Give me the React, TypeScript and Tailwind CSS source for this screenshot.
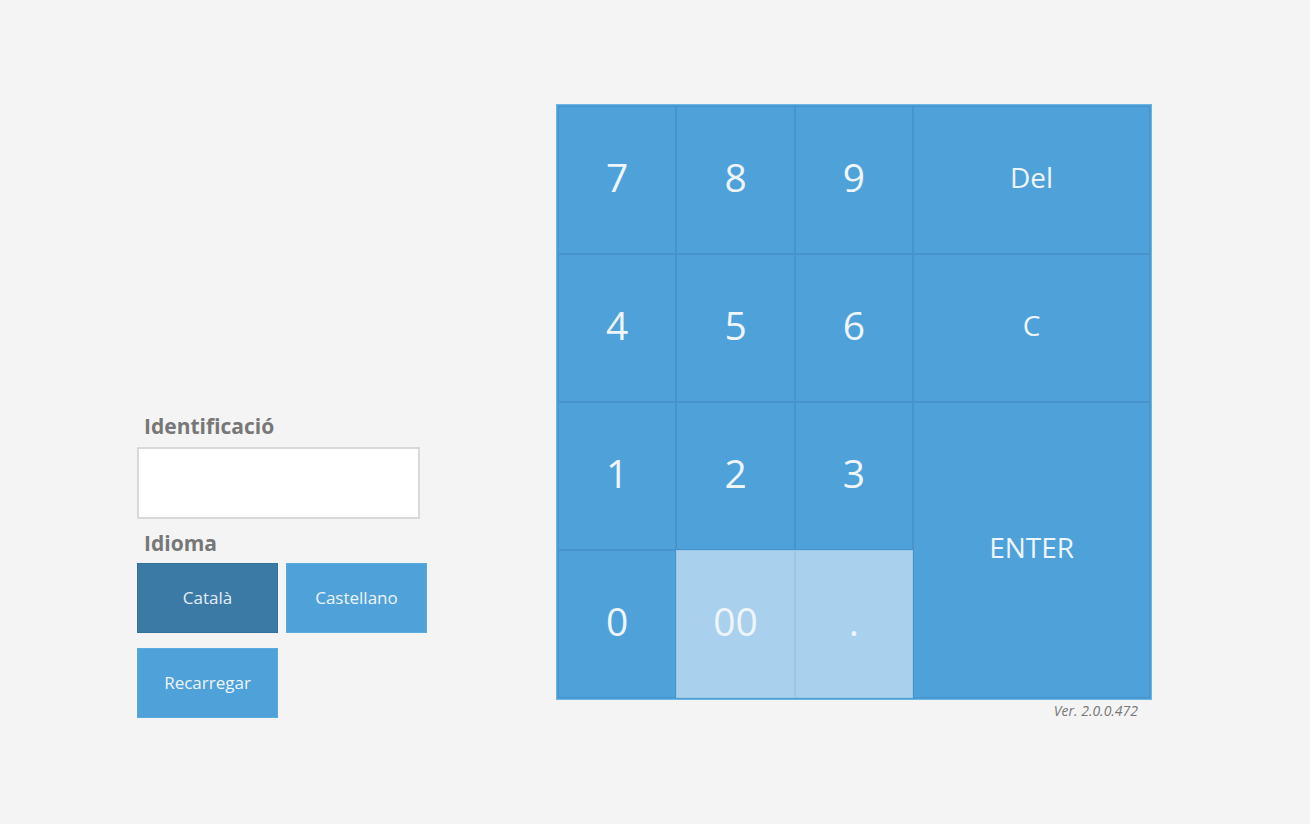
import React from 'react';

const font = { fontFamily: '"Open Sans", "Liberation Sans", sans-serif' };

type Key = { label: string; span?: string; light?: boolean; big?: boolean };

const keys: Key[] = [
  { label: '7', big: true },
  { label: '8', big: true },
  { label: '9', big: true },
  { label: 'Del', span: 'col-span-2' },
  { label: '4', big: true },
  { label: '5', big: true },
  { label: '6', big: true },
  { label: 'C', span: 'col-span-2' },
  { label: '1', big: true },
  { label: '2', big: true },
  { label: '3', big: true },
  { label: 'ENTER', span: 'col-span-2 row-span-2' },
  { label: '0', big: true },
  { label: '00', big: true, light: true },
  { label: '.', big: true, light: true },
];

export default function App() {
  return (
    <div className="min-h-[824px] w-full bg-[#f4f4f4] pt-[104px]" style={font}>
      <div className="flex items-start">
        {/* Left panel */}
        <div className="ml-[137px] mt-[308px] w-[290px]">
          <div className="pl-[7px] text-[21px] font-bold leading-[28px] text-[#777]">Identificació</div>
          <div className="mt-[7px] h-[72px] w-[283px] border-2 border-[#d9d9d9] bg-white"></div>
          <div className="mt-[10px] pl-[7px] text-[21px] font-bold leading-[28px] text-[#777]">Idioma</div>
          <div className="mt-[6px] flex gap-[8px]">
            <button className="h-[70px] w-[141px] border border-[#35709b] bg-[#3c7aa6] text-[17px] text-[#e4edf5]">
              Català
            </button>
            <button className="h-[70px] w-[141px] border border-[#5aaade] bg-[#4fa1d9] text-[17px] text-[#eef5fb]">
              Castellano
            </button>
          </div>
          <button className="mt-[15px] h-[70px] w-[141px] border border-[#5aaade] bg-[#4fa1d9] text-[17px] text-[#eef5fb]">
            Recarregar
          </button>
        </div>

        {/* Keypad */}
        <div className="ml-[129px] flex flex-col">
          <div className="h-[596px] w-[596px] border border-[#6cb4e2] bg-[#4c9ed7] p-px">
            <div className="grid h-full w-full grid-cols-5 grid-rows-4">
              {keys.map(k => (
                <div
                  key={k.label}
                  className={`flex items-center justify-center border pb-[6px] ${k.span ?? ''} ${
                    k.light ? 'border-[#9cc6e5] bg-[#a9d0ec]' : 'border-[#4694cb] bg-[#4fa1d9]'
                  } ${k.big ? 'text-[39px]' : 'text-[28px]'} text-[#eef5fb]`}
                >
                  {k.label}
                </div>
              ))}
            </div>
          </div>
          <div className="pr-[14px] pt-[1px] text-right text-[14px] italic leading-[20px] text-[#777]">Ver. 2.0.0.472</div>
        </div>
      </div>
    </div>
  );
}
